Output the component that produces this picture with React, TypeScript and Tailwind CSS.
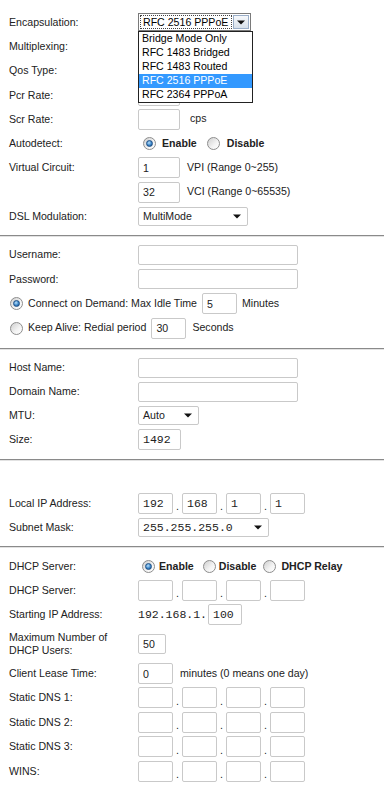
import type { ReactNode } from "react";

// Router setup page: WAN / PPPoE / network / DHCP settings
const sans = "font-['Liberation_Sans',Arial,sans-serif]";
const mono = "font-['Liberation_Mono','Courier_New',monospace]";

function Row({ label, h = "h-[24.3px]", children }: { label?: ReactNode; h?: string; children?: ReactNode }) {
  return (
    <div className={"flex items-center " + h}>
      <div className="w-[138px] shrink-0 pl-[9px] leading-[13px]">{label}</div>
      <div className="flex items-center">{children}</div>
    </div>
  );
}

function Box({ w = "w-[42px]", value = "", isMono = false, h = "h-[21px]" }: { w?: string; value?: string; isMono?: boolean; h?: string }) {
  return (
    <input
      readOnly
      value={value}
      className={
        "box-border rounded-[2px] border border-[#c9c9c9] bg-white pl-[4px] text-[#222] outline-none " +
        w + " " + h + " " +
        (isMono ? mono + " text-[11.5px]" : sans + " text-[10.6px]")
      }
    />
  );
}

function Arrow() {
  return (
    <svg width="8" height="5" viewBox="0 0 8 5" className="shrink-0">
      <path d="M0 0.5h8L4 4.5z" fill="#111" />
    </svg>
  );
}

function Select({ w, value, isMono = false }: { w: string; value: string; isMono?: boolean }) {
  return (
    <div className={"box-border flex h-[19px] items-center justify-between rounded-[2px] border border-[#c9c9c9] bg-white pl-[4px] pr-[6px] " + w}>
      <span className={isMono ? mono + " text-[11.5px]" : "text-[10.6px]"}>{value}</span>
      <Arrow />
    </div>
  );
}

function Radio({ checked = false }: { checked?: boolean }) {
  return (
    <span className="relative inline-block h-[13px] w-[13px] shrink-0 rounded-full border border-[#8d8d8d] bg-[linear-gradient(135deg,#cfcfcf,#f4f4f4_60%,#ffffff)]">
      {checked && (
        <span className="absolute left-[2px] top-[2px] h-[7px] w-[7px] rounded-full border border-[#1d4f86] bg-[radial-gradient(circle_at_40%_35%,#b9e0fb,#3b86c9_55%,#15467c)]" />
      )}
    </span>
  );
}

function Ip({ values = ["", "", "", ""] }: { values?: string[] }) {
  return (
    <>
      {values.map((v, i) => (
        <div key={i} className="flex items-center">
          {i > 0 && <span className="w-[9px] pt-[6px] text-center text-[10.6px] leading-none">.</span>}
          <Box w="w-[35px]" value={v} isMono />
        </div>
      ))}
    </>
  );
}

function Rule() {
  return <div className="h-[2px] border-t border-b border-t-[#8a8a8a] border-b-[#e2e2e2]" />;
}

const encOptions = ["Bridge Mode Only", "RFC 1483 Bridged", "RFC 1483 Routed", "RFC 2516 PPPoE", "RFC 2364 PPPoA"];

export default function App() {
  return (
    <div className={"w-[384px] bg-white pb-[8px] text-[10.6px] text-[#222] " + sans}>
      {/* ATM / DSL settings */}
      <div className="pt-[10px]">
        <Row label="Encapsulation:">
          <div className="relative">
            <div className="box-border flex h-[18px] w-[113px] items-center border border-[#7a7a7a] bg-white p-[1px]">
              <div className="flex h-full flex-1 items-center border border-dotted border-[#444] pl-[2px] text-[10.6px] leading-none text-black">RFC 2516 PPPoE</div>
              <div className="ml-[1px] flex h-full w-[16px] items-center justify-center border border-[#9aaec8] bg-[linear-gradient(#f6f8fb,#d7e0ea)]">
                <Arrow />
              </div>
            </div>
            <div className="absolute left-0 top-full z-10 box-border w-[115px] border border-[#222] bg-white">
              {encOptions.map((o) => (
                <div key={o} className={"flex h-[14px] items-center pl-[3px] text-[10.6px] " + (o === "RFC 2516 PPPoE" ? "bg-[#3399ff] text-white" : "text-black")}>
                  {o}
                </div>
              ))}
            </div>
          </div>
        </Row>
        <Row label="Multiplexing:" />
        <Row label="Qos Type:" />
        <Row label="Pcr Rate:">
          <Box />
        </Row>
        <Row label="Scr Rate:">
          <Box />
          <span className="ml-[10px]">cps</span>
        </Row>
        <Row label="Autodetect:">
          <span className="ml-[5px] flex items-center"><Radio checked /></span>
          <span className="ml-[6px] font-bold">Enable</span>
          <span className="ml-[10px] flex items-center"><Radio /></span>
          <span className="ml-[7px] font-bold">Disable</span>
        </Row>
        <Row label="Virtual Circuit:">
          <Box value="1" />
          <span className="ml-[7px]">VPI (Range 0~255)</span>
        </Row>
        <Row>
          <Box value="32" />
          <span className="ml-[7px]">VCI (Range 0~65535)</span>
        </Row>
        <Row label="DSL Modulation:">
          <Select w="w-[110px]" value="MultiMode" />
        </Row>
      </div>
      <div className="mt-[6px]">
        <Rule />
      </div>

      {/* PPPoE login */}
      <div className="pt-[6px]">
        <Row h="h-[24.5px]" label="Username:">
          <Box w="w-[160px]" h="h-[20px]" />
        </Row>
        <Row h="h-[24.5px]" label="Password:">
          <Box w="w-[160px]" h="h-[20px]" />
        </Row>
        <div className="flex h-[24.5px] items-center pl-[10px]">
          <Radio checked />
          <span className="ml-[5px]">Connect on Demand: Max Idle Time</span>
          <span className="ml-[5px]"><Box w="w-[35px]" value="5" /></span>
          <span className="ml-[5px]">Minutes</span>
        </div>
        <div className="flex h-[24.5px] items-center pl-[10px]">
          <Radio />
          <span className="ml-[5px]">Keep Alive: Redial period</span>
          <span className="ml-[5px]"><Box w="w-[35px]" value="30" /></span>
          <span className="ml-[6px]">Seconds</span>
        </div>
      </div>
      <div className="mt-[7px]">
        <Rule />
      </div>

      {/* Optional settings */}
      <div className="pt-[6px]">
        <Row h="h-[24px]" label="Host Name:">
          <Box w="w-[160px]" h="h-[20px]" />
        </Row>
        <Row h="h-[24px]" label="Domain Name:">
          <Box w="w-[160px]" h="h-[20px]" />
        </Row>
        <Row h="h-[24px]" label="MTU:">
          <Select w="w-[61px]" value="Auto" />
        </Row>
        <Row h="h-[24px]" label="Size:">
          <Box w="w-[43px]" value="1492" isMono />
        </Row>
      </div>
      <div className="mt-[7px]">
        <Rule />
      </div>

      {/* Network setup */}
      <div className="pt-[31px]">
        <Row h="h-[24px]" label="Local IP Address:">
          <Ip values={["192", "168", "1", "1"]} />
        </Row>
        <Row h="h-[24px]" label="Subnet Mask:">
          <Select w="w-[131px]" value="255.255.255.0" isMono />
        </Row>
      </div>
      <div className="mt-[6px]">
        <Rule />
      </div>

      {/* DHCP */}
      <div className="pt-[7px]">
        <Row h="h-[24px]" label="DHCP Server:">
          <span className="ml-[4px] flex items-center"><Radio checked /></span>
          <span className="ml-[4px] font-bold">Enable</span>
          <span className="ml-[9px] flex items-center"><Radio /></span>
          <span className="ml-[3px] font-bold">Disable</span>
          <span className="ml-[7px] flex items-center"><Radio /></span>
          <span className="ml-[5px] font-bold">DHCP Relay</span>
        </Row>
        <Row h="h-[24px]" label="DHCP Server:">
          <Ip />
        </Row>
        <Row h="h-[24px]" label="Starting IP Address:">
          <span className={mono + " text-[11.5px]"}>192.168.1.</span>
          <span className="ml-[1px]"><Box w="w-[34px]" value="100" isMono /></span>
        </Row>
        <Row h="h-[35px]" label={<>Maximum Number of<br />DHCP Users:</>}>
          <Box w="w-[28px]" h="h-[20px]" value="50" />
        </Row>
        <Row h="h-[24px]" label="Client Lease Time:">
          <Box w="w-[35px]" value="0" />
          <span className="ml-[7px]">minutes (0 means one day)</span>
        </Row>
        {["Static DNS 1:", "Static DNS 2:", "Static DNS 3:", "WINS:"].map((l) => (
          <Row key={l} h="h-[24.5px]" label={l}>
            <Ip />
          </Row>
        ))}
      </div>
    </div>
  );
}
